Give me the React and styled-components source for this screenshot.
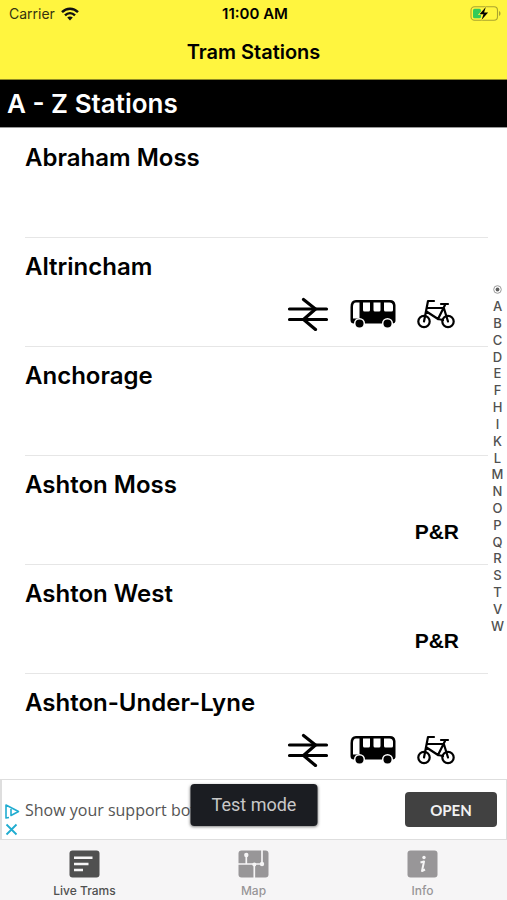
import React from 'react';
import styled, { createGlobalStyle } from 'styled-components';

const Global = createGlobalStyle`
  *, *::before, *::after { box-sizing: border-box; }
  body { margin: 0; background: #fff; }
  button { border: 0; padding: 0; background: none; font: inherit; color: inherit; cursor: pointer; }
`;

const Screen = styled.div`
  height: 100vh;
  display: flex;
  flex-direction: column;
  color: #000;
  font-family: Inter, sans-serif;
`;

const Header = styled.header`
  flex: none;
  background: #fff53f;
  border-bottom: 1px solid #8f8a26;
`;

const StatusBar = styled.div`
  display: grid;
  grid-template-columns: 1fr auto 1fr;
  align-items: center;
  height: 27px;
  padding: 0 6px 0 9px;
  font-size: 14px;
  line-height: 16px;
`;

const Carrier = styled.span`
  display: flex;
  align-items: center;
  gap: 6px;
  color: #35330f;
`;

const Clock = styled.time`
  font-size: 15px;
  font-weight: 600;
`;

const BatterySlot = styled.span`
  justify-self: end;
  display: flex;
`;

const NavTitle = styled.h1`
  margin: 0;
  height: 52px;
  font-size: 20px;
  line-height: 50px;
  font-weight: 600;
  text-align: center;
`;

const SectionTitle = styled.h2`
  flex: none;
  margin: 0;
  padding: 0 7px;
  border-bottom: 1px solid #999;
  background: #000;
  color: #fff;
  font-size: 26px;
  line-height: 47px;
  font-weight: 600;
`;

const Body = styled.main`
  flex: 1;
  min-height: 0;
  display: flex;
`;

const List = styled.ul`
  flex: 1;
  margin: 0;
  padding: 1px 0 0 25px;
  list-style: none;
  overflow-y: auto;
  scrollbar-width: none;
`;

const Row = styled.li`
  display: flex;
  flex-direction: column;
  justify-content: space-between;
  height: 109px;
  padding: 14px 29px 11px 0;
  border-bottom: 1px solid #e6e6e6;
`;

const StationName = styled.h3`
  margin: 0;
  font-size: 24px;
  line-height: 30px;
  font-weight: 600;
`;

const Facilities = styled.div`
  display: flex;
  align-items: center;
  justify-content: flex-end;
  height: 42px;
`;

const FacilityIcons = styled.div`
  display: flex;
  align-items: center;
  gap: 21px;
  padding-right: 4px;
`;

const ParkRide = styled.span`
  font: bold 21px/24px "Liberation Sans", Arial, sans-serif;
`;

const Index = styled.nav`
  flex: none;
  align-self: center;
  width: 19px;
  height: 361px;
  padding-top: 8px;
  display: flex;
  flex-direction: column;
`;

const IndexLink = styled.a`
  flex: 1;
  min-height: 0;
  display: flex;
  align-items: center;
  justify-content: center;
  color: #505050;
  font-size: 13px;
  line-height: 16px;
  font-weight: 500;
  text-decoration: none;
`;

const Ad = styled.aside`
  position: relative;
  flex: none;
  display: flex;
  align-items: center;
  gap: 3px;
  height: 61px;
  padding: 0 9px 0 3px;
  border: 1px solid #dedede;
  border-left-width: 2px;
  background: #fff;
`;

const AdControls = styled.div`
  display: flex;
  flex-direction: column;
  gap: 4px;
  width: 17px;
  padding-top: 20px;

  svg { display: block; }
`;

const AdText = styled.p`
  flex: 1;
  min-width: 0;
  margin: 0;
  overflow: hidden;
  white-space: nowrap;
  color: #555;
  font: 16px/24px "Open Sans", sans-serif;
`;

const OpenButton = styled.button`
  && {
    width: 92px;
    height: 35px;
    border-radius: 4px;
    background: #414141;
    color: #f2f2f2;
    font: bold 15px/20px Lato, sans-serif;
  }
`;

const TestBadge = styled.div`
  position: absolute;
  top: 4px;
  left: 50%;
  transform: translateX(-50%);
  width: 127px;
  border-radius: 4px;
  background: #1b1d22;
  box-shadow: 0 1px 3px rgba(0, 0, 0, 0.5);
  color: #c8c8c8;
  font: 18px/42px Roboto, sans-serif;
  text-align: center;
`;

const Tabs = styled.nav`
  flex: none;
  display: grid;
  grid-template-columns: repeat(3, 1fr);
  height: 60px;
  background: #f6f5f6;
`;

const Tab = styled.button`
  && {
    display: flex;
    flex-direction: column;
    align-items: center;
    gap: 5px;
    padding-top: 10px;
    color: ${({ $active }) => ($active ? '#505050' : '#989698')};
    font-size: 12px;
    line-height: 16px;
    font-weight: 500;
  }
`;

const Wifi = () => (
  <svg width="18" height="14" viewBox="0 0 18 14" fill="none" stroke="#111" strokeWidth="2.4" aria-hidden="true">
    <path d="M1 5.2C5.5 .5 12.500 .5 17 5.200M4 8.300C6.900 5.400 11.100 5.400 14 8.300" />
    <path d="M9 13.500 6.200 10.600C7.800 9.200 10.200 9.200 11.800 10.600Z" fill="#111" stroke="none" />
  </svg>
);

const Battery = () => (
  <svg width="31" height="15" viewBox="0 0 31 15" aria-label="Battery charging">
    <rect x="1" y=".8" width="26.500" height="13.400" rx="3.500" fill="none" stroke="#aaa42f" strokeWidth="1.100" />
    <path d="M29 5v5c2-.8 2-4.200 0-5Z" fill="#aaa42f" />
    <rect x="3" y="2.800" width="8" height="9.400" rx="1.500" fill="#35cb58" />
    <path d="M15.800 1 9.500 8.200h4L11.500 14l6.600-7.400h-4Z" fill="#000" stroke="#fff53f" strokeWidth="1.500" paintOrder="stroke" />
  </svg>
);

const Rail = () => (
  <svg width="42" height="34" viewBox="0 0 42 34" fill="none" stroke="#000" strokeWidth="3.200" strokeLinecap="round" role="img" aria-label="Rail">
    <path d="M2.500 12H39.500M2.500 22.500H39.500" />
    <path d="M16.500 2.500 28.500 12 16.500 22.500 28.500 32.500" />
  </svg>
);

const Bus = () => (
  <svg width="46" height="30" viewBox="0 0 46 30" role="img" aria-label="Bus">
    <path d="M6 1H40Q45 1 45.500 6V21.500Q45.500 24.500 42.500 24.500H4Q.5 24.500 .5 21V8Q.5 1 6 1Z" fill="#000" />
    <path d="M6 3.500H9.500V19.500H3V8Q3 3.500 6 3.500ZM13 3.500H20V11Q20 12.500 18.500 12.500H14.500Q13 12.500 13 11ZM23.500 3.500H30.500V11Q30.500 12.500 29 12.500H25Q23.500 12.500 23.500 11ZM34 3.500H39.500Q42.500 3.500 43 6.500V11Q43 12.500 41.500 12.500H35.500Q34 12.500 34 11Z" fill="#fff" />
    <g fill="#000" stroke="#fff" strokeWidth="1.500"><circle cx="9.500" cy="24.500" r="4.800" /><circle cx="37.500" cy="24.500" r="4.800" /></g>
  </svg>
);

const Bike = () => (
  <svg width="38" height="30" viewBox="0 0 38 30" fill="none" stroke="#000" strokeWidth="2.200" strokeLinecap="round" strokeLinejoin="round" role="img" aria-label="Cycle storage">
    <circle cx="7" cy="22.500" r="5.700" />
    <circle cx="31" cy="22.500" r="5.700" />
    <path d="M7 22.500 11 2H17M10 9H27M9.500 12.500 21 20 28 6M24 5H31M27 9.500 31 22.500M21 20 26 21" />
  </svg>
);

const AdChoices = () => (
  <svg width="15" height="15" viewBox="0 0 15 15" fill="none" stroke="#20acd0" strokeWidth="1.600" strokeLinejoin="round" aria-hidden="true">
    <path d="M4 13.500 1 14V1L13.500 7.500 6 11.500V5M6 3.600V4.600" />
  </svg>
);

const CloseMark = () => (
  <svg width="13" height="13" viewBox="0 0 13 13" fill="none" stroke="#20acd0" strokeWidth="1.800" aria-hidden="true">
    <path d="M1.500 1.500 11.500 11.500M11.500 1.500 1.500 11.500" />
  </svg>
);

const IndexDot = () => (
  <svg width="9" height="9" viewBox="0 0 9 9" aria-hidden="true">
    <circle cx="4.500" cy="4.500" r="3.800" fill="none" stroke="#999" />
    <circle cx="4.500" cy="4.500" r="1.900" fill="#606060" />
  </svg>
);

const ListIcon = () => (
  <svg width="31" height="28" viewBox="0 0 31 28" aria-hidden="true">
    <rect x=".5" y=".5" width="30" height="27" rx="3" fill="currentColor" />
    <path d="M5 7.800H23.500M5 14H19.500M5 20H14" stroke="#f6f5f6" strokeWidth="2.600" />
  </svg>
);

const MapIcon = () => (
  <svg width="31" height="28" viewBox="0 0 31 28" aria-hidden="true">
    <rect x=".5" y=".5" width="30" height="27" rx="3" fill="currentColor" />
    <path d="M0 14H24V0M8.300 5V14M16.300 14V28" fill="none" stroke="#f6f5f6" strokeWidth="1.700" />
    <g fill="#f6f5f6"><circle cx="8.300" cy="5" r="2.200" /><circle cx="16.300" cy="14.500" r="2" /><circle cx="24" cy="14" r="2.200" /></g>
  </svg>
);

const InfoIcon = () => (
  <svg width="31" height="28" viewBox="0 0 31 28" aria-hidden="true">
    <rect x=".5" y=".5" width="30" height="27" rx="3" fill="currentColor" />
    <circle cx="17" cy="7.500" r="1.700" fill="#f6f5f6" />
    <path d="M13.500 12.500 17 11.500 15 21 18 19.500" fill="none" stroke="#f6f5f6" strokeWidth="2" strokeLinejoin="round" />
  </svg>
);

const stations = [
  { name: 'Abraham Moss' },
  { name: 'Altrincham', interchange: true },
  { name: 'Anchorage' },
  { name: 'Ashton Moss', parkRide: true },
  { name: 'Ashton West', parkRide: true },
  { name: 'Ashton-Under-Lyne', interchange: true },
];

const tabs = [
  { label: 'Live Trams', Icon: ListIcon, active: true },
  { label: 'Map', Icon: MapIcon },
  { label: 'Info', Icon: InfoIcon },
];

const Station = ({ name, interchange, parkRide }) => (
  <Row>
    <StationName>{name}</StationName>
    <Facilities>
      {interchange && <FacilityIcons><Rail /><Bus /><Bike /></FacilityIcons>}
      {parkRide && <ParkRide>P&amp;R</ParkRide>}
    </Facilities>
  </Row>
);

export default function App() {
  return (
    <Screen>
      <Global />
      <Header>
        <StatusBar>
          <Carrier>Carrier <Wifi /></Carrier>
          <Clock>11:00 AM</Clock>
          <BatterySlot><Battery /></BatterySlot>
        </StatusBar>
        <NavTitle>Tram Stations</NavTitle>
      </Header>
      <SectionTitle id="A">A - Z Stations</SectionTitle>
      <Body>
        <List>{stations.map((s) => <Station key={s.name} {...s} />)}</List>
        <Index aria-label="Station index">
          <IndexLink href="#top" aria-label="Top"><IndexDot /></IndexLink>
          {[...'ABCDEFHIKLMNOPQRSTVW'].map((l) => <IndexLink key={l} href={`#${l}`}>{l}</IndexLink>)}
        </Index>
      </Body>
      <Ad>
        <AdControls>
          <button aria-label="Ad choices"><AdChoices /></button>
          <button aria-label="Close ad"><CloseMark /></button>
        </AdControls>
        <AdText>Show your support bot</AdText>
        <OpenButton>OPEN</OpenButton>
        <TestBadge>Test mode</TestBadge>
      </Ad>
      <Tabs aria-label="Main">
        {tabs.map(({ label, Icon, active }) => (
          <Tab key={label} $active={active} aria-current={active ? 'page' : undefined}><Icon />{label}</Tab>
        ))}
      </Tabs>
    </Screen>
  );
}
